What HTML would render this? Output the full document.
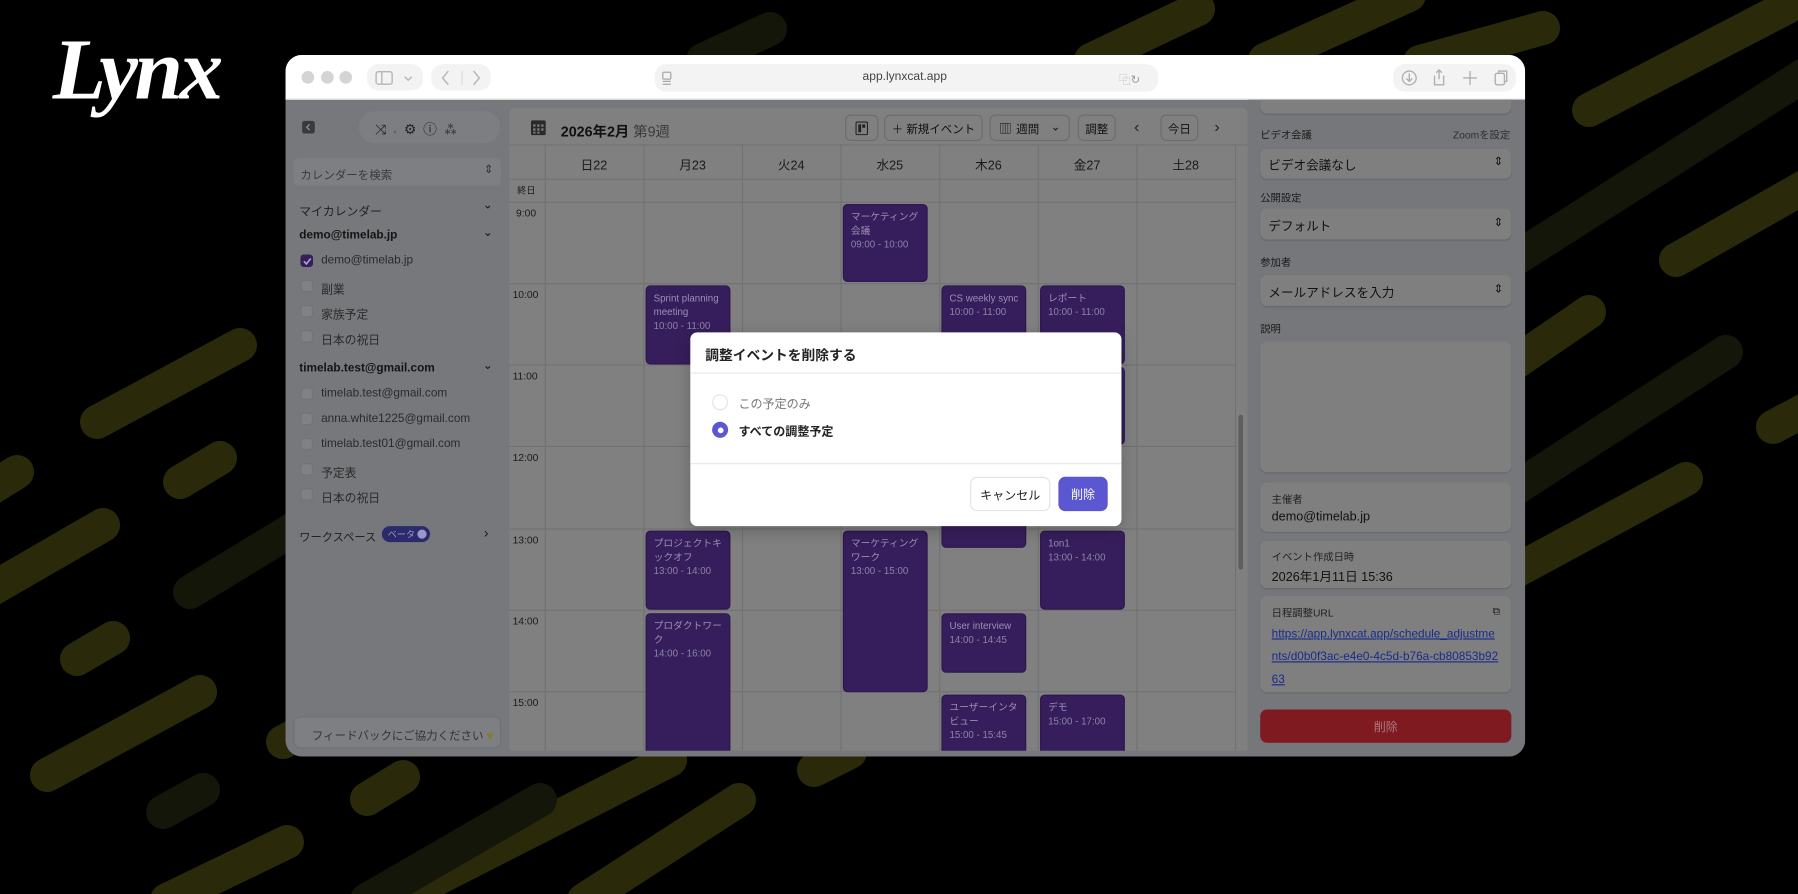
<!DOCTYPE html>
<html><head><meta charset="utf-8">
<style>
*{box-sizing:border-box;margin:0;padding:0}
html,body{width:1798px;height:894px;overflow:hidden;background:#000;font-family:"Liberation Sans","Noto Sans CJK JP",sans-serif}
#bg{position:absolute;left:0;top:0}
#wrap{position:absolute;left:0;top:0;width:1568px;height:780px;transform:scale(1.14668,1.14615);transform-origin:0 0}
.a{position:absolute}
.logo{left:46px;top:18px;color:#fff;font-family:"Liberation Serif",serif;font-style:italic;font-weight:bold;font-size:76px;letter-spacing:-3px}
.win{left:249px;top:48px;width:1081px;height:612px;border-radius:14px;overflow:hidden;background:#77787b}
.tb{left:0;top:0;width:1081px;height:39px;background:#fff;border-bottom:1px solid #e4e4e4}
.dot{width:11px;height:11px;border-radius:50%;background:#d4d4d4;top:14px}
.pill{background:#f3f3f3;border-radius:10px}
.sb{color:#141414;font-size:10.3px}
.cb{width:11px;height:11px;border-radius:3px;background:#808184;border:1px solid #727376}
.main{left:195px;top:46px;width:644px;height:561px;background:#808080;border-radius:6px 6px 0 0;overflow:hidden}
.vl{width:1px;background:#727272}
.hl{height:1px;background:#727272}
.btn{border:1px solid #6c6c6c;border-radius:5px;height:23px;top:6px;font-size:10px;color:#111;display:flex;align-items:center;justify-content:center;gap:4px}
.ev{background:#361e5c;border-radius:4px;color:#9a90b2;font-size:8.5px;padding:4px 6px;line-height:12px;border:1px solid #2d174e}
.ev .t{color:#8c84a3}
.rp{left:839px;top:39px;width:242px;height:573px;background:#76777a;overflow:hidden}
.fld{left:11px;width:219px;background:#7f7f80;border-radius:6px;font-size:11px;color:#111;box-shadow:0 1px 1px rgba(0,0,0,.12)}
.lbl{left:11px;font-size:9px;color:#1a1a1a}
.modal{left:602px;top:290px;width:376px;height:169px;background:#fff;border-radius:6px;box-shadow:0 4px 14px rgba(0,0,0,.2)}
</style></head><body>
<svg id="bg" width="1798" height="894" stroke-linecap="round" stroke-width="34" fill="none">
<g stroke="#2a2a0b">
<line x1="97" y1="422" x2="240" y2="345"/>
<line x1="-20" y1="495" x2="17" y2="472"/>
<line x1="180" y1="482" x2="220" y2="458"/>
<line x1="-20" y1="596" x2="103" y2="525"/>
<line x1="77" y1="659" x2="113" y2="638"/>
<line x1="47" y1="775" x2="200" y2="692"/>
<line x1="167" y1="900" x2="287" y2="842"/>
<line x1="367" y1="799" x2="403" y2="777"/>
<line x1="283" y1="742" x2="300" y2="733"/>
<line x1="395" y1="900" x2="670" y2="760"/>
<line x1="584" y1="900" x2="739" y2="800"/>
<line x1="814" y1="770" x2="850" y2="752"/>
<line x1="1091" y1="60" x2="1198" y2="9"/>
<line x1="1265" y1="60" x2="1409" y2="-5"/>
<line x1="1420" y1="62" x2="1543" y2="28"/>
<line x1="1589" y1="110" x2="1820" y2="-10"/>
<line x1="1676" y1="260" x2="1820" y2="178"/>
<line x1="1490" y1="380" x2="1589" y2="312"/>
<line x1="1773" y1="427" x2="1820" y2="402"/>
<line x1="1490" y1="585" x2="1686" y2="479"/>
</g>
<g stroke="#15160a">
<line x1="190" y1="592" x2="300" y2="525"/>
<line x1="163" y1="812" x2="203" y2="790"/>
<line x1="367" y1="900" x2="540" y2="800"/>
<line x1="703" y1="60" x2="770" y2="29"/>
<line x1="1490" y1="275" x2="1820" y2="65"/>
<line x1="1490" y1="505" x2="1726" y2="352"/>
</g>
</svg>
<div id="wrap">
<div class="a logo">Lynx</div>
<div class="a win">
 <div class="a tb">
  <div class="a dot" style="left:14px"></div><div class="a dot" style="left:31px"></div><div class="a dot" style="left:47px"></div>
  <div class="a pill" style="left:71px;top:8px;width:49px;height:23px"></div>
  <svg class="a" style="left:78px;top:13px" width="40" height="14" fill="none" stroke="#b5b5b5" stroke-width="1.2"><rect x="1" y="1.5" width="14" height="11" rx="2"/><line x1="6" y1="1.5" x2="6" y2="12.5"/><path d="M26 6l3 3 3-3"/></svg>
  <div class="a pill" style="left:127px;top:8px;width:52px;height:23px"></div>
  <svg class="a" style="left:134px;top:12px" width="40" height="16" fill="none" stroke="#b5b5b5" stroke-width="1.3"><path d="M8 2l-5 6 5 6"/><line x1="20" y1="2" x2="20" y2="14" stroke="#e0e0e0"/><path d="M30 2l5 6-5 6"/></svg>
  <div class="a pill" style="left:322px;top:8px;width:439px;height:24px"></div>
  <svg class="a" style="left:328px;top:14px" width="10" height="13" fill="none" stroke="#a8a8a8" stroke-width="1.1"><rect x="1" y="1" width="7" height="6" rx="1"/><line x1="1" y1="9" x2="8" y2="9"/><line x1="1" y1="11.5" x2="8" y2="11.5"/></svg>
  <div class="a" style="left:490px;top:13px;width:100px;text-align:center;font-size:10.5px;color:#444">app.lynxcat.app</div>
  <div class="a" style="left:727px;top:13px;font-size:10px;color:#9a9a9a">⿻↻</div>
  <div class="a pill" style="left:966px;top:8px;width:107px;height:24px"></div>
  <svg class="a" style="left:972px;top:12px" width="100" height="16" fill="none" stroke="#b0b0b0" stroke-width="1.2"><circle cx="8" cy="8" r="6"/><path d="M8 4v7M5.5 8.5L8 11l2.5-2.5"/><path d="M30 6v8h8V6M34 1v8M31.5 3.5L34 1l2.5 2.5"/><path d="M61 2v12M55 8h12"/><rect x="83" y="4" width="8" height="10" rx="1.5"/><path d="M86 4V2h7v9h-2"/></svg>
 </div>
 <!-- sidebar -->
 <svg class="a" style="left:14px;top:57px" width="12" height="12"><rect x="0.5" y="0.5" width="11" height="11" rx="2" fill="#3a3a3c"/><path d="M7 3.5L4.5 6 7 8.5" stroke="#9a9a9a" fill="none"/></svg>
 <div class="a" style="left:64px;top:49px;width:123px;height:28px;border-radius:14px;background:#7d7e81"></div>
 <div class="a" style="left:78px;top:56px;font-size:12px;color:#222;letter-spacing:6px">⤨<span style="font-size:6px;color:#666">●</span>⚙ⓘ<span>⁂</span></div>
 <div class="a" style="left:7px;top:90px;width:181px;height:24px;border-radius:5px;background:#7e7f82"></div>
 <div class="a sb" style="left:13px;top:96px;font-size:10px;color:#3a3a3a">カレンダーを検索</div>
 <div class="a sb" style="left:173px;top:95px;font-size:10px;color:#333">⇕</div>
 <div class="a sb" style="left:12px;top:128px;color:#222">マイカレンダー</div><div class="a sb" style="left:172px;top:125px">⌄</div>
 <div class="a sb" style="left:12px;top:152px;font-weight:bold">demo@timelab.jp</div><div class="a sb" style="left:172px;top:149px">⌄</div>
 <div class="a cb" style="left:13px;top:174px;background:#361e5c;border-color:#361e5c"></div>
 <svg class="a" style="left:14px;top:175px" width="10" height="10"><path d="M2 5l2.2 2.3L8 2.5" stroke="#b0a8c8" stroke-width="1.4" fill="none"/></svg>
 <div class="a sb" style="left:31px;top:174px;color:#2a2a2a">demo@timelab.jp</div>
 <div class="a cb" style="left:13px;top:196px"></div><div class="a sb" style="left:31px;top:196px;color:#2a2a2a">副業</div>
 <div class="a cb" style="left:13px;top:218px"></div><div class="a sb" style="left:31px;top:218px;color:#2a2a2a">家族予定</div>
 <div class="a cb" style="left:13px;top:240px"></div><div class="a sb" style="left:31px;top:240px;color:#2a2a2a">日本の祝日</div>
 <div class="a sb" style="left:12px;top:268px;font-weight:bold">timelab.test@gmail.com</div><div class="a sb" style="left:172px;top:265px">⌄</div>
 <div class="a cb" style="left:13px;top:290px"></div><div class="a sb" style="left:31px;top:290px;color:#2a2a2a">timelab.test@gmail.com</div>
 <div class="a cb" style="left:13px;top:312px"></div><div class="a sb" style="left:31px;top:312px;color:#2a2a2a">anna.white1225@gmail.com</div>
 <div class="a cb" style="left:13px;top:334px"></div><div class="a sb" style="left:31px;top:334px;color:#2a2a2a">timelab.test01@gmail.com</div>
 <div class="a cb" style="left:13px;top:356px"></div><div class="a sb" style="left:31px;top:356px;color:#2a2a2a">予定表</div>
 <div class="a cb" style="left:13px;top:378px"></div><div class="a sb" style="left:31px;top:378px;color:#2a2a2a">日本の祝日</div>
 <div class="a sb" style="left:12px;top:413px;color:#222;font-size:9.8px">ワークスペース</div>
 <div class="a" style="left:84px;top:411px;width:42px;height:14px;border-radius:7px;background:#2b2a6a;color:#9a98c8;font-size:8px;padding:2px 0 0 5px">ベータ <span style="display:inline-block;width:8px;height:8px;border-radius:50%;background:#9a98c8;vertical-align:-1px"></span></div>
 <div class="a sb" style="left:173px;top:410px;font-size:12px">›</div>
 <div class="a" style="left:7px;top:577px;width:181px;height:28px;border-radius:6px;background:#7e7f82;border:1px solid #707174;font-size:10px;color:#333;padding:7px 0 0 15px">フィードバックにご協力ください <span style="color:#8a7a20">♥</span></div>
 <!-- main calendar -->
 <div class="a main">
  <svg class="a" style="left:19px;top:10px" width="13" height="14" fill="#2a2a2a"><rect x="0" y="1" width="13" height="13" rx="1.5"/><g fill="#808080"><rect x="2" y="4.5" width="2" height="2"/><rect x="5.5" y="4.5" width="2" height="2"/><rect x="9" y="4.5" width="2" height="2"/><rect x="2" y="8" width="2" height="2"/><rect x="5.5" y="8" width="2" height="2"/><rect x="9" y="8" width="2" height="2"/><rect x="2" y="11" width="2" height="1.5"/><rect x="5.5" y="11" width="2" height="1.5"/></g></svg>
  <div class="a" style="left:45px;top:10px;font-size:12.5px;font-weight:bold;color:#111">2026年2月 <span style="font-weight:normal;color:#3a3a3a">第9週</span></div>
  <div class="a btn" style="left:293px;width:29px"><svg width="11" height="12"><rect x="0.5" y="0.5" width="10" height="11" rx="1" fill="none" stroke="#222"/><rect x="2.5" y="2.5" width="2.5" height="7" fill="#222"/><rect x="6" y="2.5" width="2.5" height="3" fill="#222"/></svg></div>
  <div class="a btn" style="left:327px;width:86px">＋ 新規イベント</div>
  <div class="a btn" style="left:419px;width:70px"><span style="font-size:11px">▥</span> 週間 <span style="margin-left:6px">⌄</span></div>
  <div class="a btn" style="left:496px;width:33px">調整</div>
  <div class="a" style="left:545px;top:8px;font-size:14px;color:#222">‹</div>
  <div class="a btn" style="left:568px;width:33px">今日</div>
  <div class="a" style="left:615px;top:8px;font-size:14px;color:#222">›</div>
  <div class="a hl" style="left:0;top:32px;width:644px"></div>
  <div class="a hl" style="left:0;top:62px;width:633px"></div>
  <div class="a hl" style="left:0;top:82px;width:633px"></div>
  <div class="a hl" style="left:0;top:153px;width:633px"></div>
  <div class="a hl" style="left:0;top:224px;width:633px"></div>
  <div class="a hl" style="left:0;top:295px;width:633px"></div>
  <div class="a hl" style="left:0;top:367px;width:633px"></div>
  <div class="a hl" style="left:0;top:438px;width:633px"></div>
  <div class="a hl" style="left:0;top:509px;width:633px"></div>
  <div class="a vl" style="left:31px;top:32px;height:530px"></div>
  <div class="a vl" style="left:117px;top:32px;height:530px"></div>
  <div class="a vl" style="left:203px;top:32px;height:530px"></div>
  <div class="a vl" style="left:289px;top:32px;height:530px"></div>
  <div class="a vl" style="left:375px;top:32px;height:530px"></div>
  <div class="a vl" style="left:461px;top:32px;height:530px"></div>
  <div class="a vl" style="left:547px;top:32px;height:530px"></div>
  <div class="a vl" style="left:633px;top:32px;height:530px"></div>
  <div class="a" style="left:636px;top:268px;width:4px;height:135px;border-radius:2px;background:#5e5e5e"></div>
  <div class="a" style="left:31px;top:42px;width:86px;text-align:center;font-size:11px;color:#1a1a1a">日22</div>
  <div class="a" style="left:117px;top:42px;width:86px;text-align:center;font-size:11px;color:#1a1a1a">月23</div>
  <div class="a" style="left:203px;top:42px;width:86px;text-align:center;font-size:11px;color:#1a1a1a">火24</div>
  <div class="a" style="left:289px;top:42px;width:86px;text-align:center;font-size:11px;color:#1a1a1a">水25</div>
  <div class="a" style="left:375px;top:42px;width:86px;text-align:center;font-size:11px;color:#1a1a1a">木26</div>
  <div class="a" style="left:461px;top:42px;width:86px;text-align:center;font-size:11px;color:#1a1a1a">金27</div>
  <div class="a" style="left:547px;top:42px;width:86px;text-align:center;font-size:11px;color:#1a1a1a">土28</div>
  <div class="a" style="left:7px;top:67px;font-size:8px;color:#1a1a1a">終日</div>
  <div class="a" style="left:6px;top:87px;font-size:9px;color:#1a1a1a">9:00</div>
  <div class="a" style="left:3px;top:158px;font-size:9px;color:#1a1a1a">10:00</div>
  <div class="a" style="left:3px;top:229px;font-size:9px;color:#1a1a1a">11:00</div>
  <div class="a" style="left:3px;top:300px;font-size:9px;color:#1a1a1a">12:00</div>
  <div class="a" style="left:3px;top:372px;font-size:9px;color:#1a1a1a">13:00</div>
  <div class="a" style="left:3px;top:443px;font-size:9px;color:#1a1a1a">14:00</div>
  <div class="a" style="left:3px;top:514px;font-size:9px;color:#1a1a1a">15:00</div>
  <div class="a ev" style="left:291px;top:84px;width:74px;height:68px">マーケティング会議<br><span class="t">09:00 - 10:00</span></div>
  <div class="a ev" style="left:119px;top:155px;width:74px;height:69px">Sprint planning meeting<br><span class="t">10:00 - 11:00</span></div>
  <div class="a ev" style="left:377px;top:155px;width:74px;height:69px">CS weekly sync<br><span class="t">10:00 - 11:00</span></div>
  <div class="a ev" style="left:463px;top:155px;width:74px;height:69px">レポート<br><span class="t">10:00 - 11:00</span></div>
  <div class="a ev" style="left:463px;top:226px;width:74px;height:68px"></div>
  <div class="a ev" style="left:377px;top:226px;width:74px;height:158px"></div>
  <div class="a ev" style="left:119px;top:369px;width:74px;height:69px">プロジェクトキックオフ<br><span class="t">13:00 - 14:00</span></div>
  <div class="a ev" style="left:291px;top:369px;width:74px;height:141px">マーケティングワーク<br><span class="t">13:00 - 15:00</span></div>
  <div class="a ev" style="left:463px;top:369px;width:74px;height:69px">1on1<br><span class="t">13:00 - 14:00</span></div>
  <div class="a ev" style="left:119px;top:441px;width:74px;height:130px">プロダクトワーク<br><span class="t">14:00 - 16:00</span></div>
  <div class="a ev" style="left:377px;top:441px;width:74px;height:52px">User interview<br><span class="t">14:00 - 14:45</span></div>
  <div class="a ev" style="left:377px;top:512px;width:74px;height:60px">ユーザーインタビュー<br><span class="t">15:00 - 15:45</span></div>
  <div class="a ev" style="left:463px;top:512px;width:74px;height:60px">デモ<br><span class="t">15:00 - 17:00</span></div>
 </div>
 <!-- right panel -->
 <div class="a rp">
  <div class="a fld" style="top:-6px;height:18px"></div>
  <div class="a lbl" style="top:24px">ビデオ会議</div>
  <div class="a lbl" style="left:179px;top:24px;color:#2e2e2e">Zoomを設定</div>
  <div class="a fld" style="top:43px;height:26px;padding:6px 7px">ビデオ会議なし<span style="float:right;font-size:10px">⇕</span></div>
  <div class="a lbl" style="top:79px">公開設定</div>
  <div class="a fld" style="top:95px;height:27px;padding:7px 7px">デフォルト<span style="float:right;font-size:10px">⇕</span></div>
  <div class="a lbl" style="top:135px">参加者</div>
  <div class="a fld" style="top:153px;height:27px;padding:7px 7px">メールアドレスを入力<span style="float:right;font-size:10px">⇕</span></div>
  <div class="a lbl" style="top:193px">説明</div>
  <div class="a fld" style="top:211px;height:114px"></div>
  <div class="a fld" style="top:334px;height:43px;padding:8px 10px"><div style="font-size:9px;color:#222">主催者</div><div style="margin-top:3px">demo@timelab.jp</div></div>
  <div class="a fld" style="top:385px;height:41px;padding:7px 10px"><div style="font-size:9px;color:#222">イベント作成日時</div><div style="margin-top:3px">2026年1月11日 15:36</div></div>
  <div class="a fld" style="top:433px;height:84px;padding:8px 10px"><div style="font-size:9px;color:#222">日程調整URL<span style="float:right">⧉</span></div><div style="margin-top:3px;color:#1a2b8a;text-decoration:underline;font-size:10.3px;line-height:20px;word-break:break-all">https://app.lynxcat.app/schedule_adjustments/d0b0f3ac-e4e0-4c5d-b76a-cb80853b9263</div></div>
  <div class="a" style="left:11px;top:532px;width:219px;height:29px;border-radius:6px;background:#7e1a20;color:#b07a7d;font-size:10.5px;text-align:center;padding-top:8px">削除</div>
 </div>
</div>
<!-- modal -->
<div class="a modal">
 <div class="a" style="left:13px;top:11px;font-size:12px;font-weight:bold;color:#222">調整イベントを削除する</div>
 <div class="a" style="left:0;top:35px;width:376px;height:1px;background:#e8e8e8"></div>
 <div class="a" style="left:19px;top:54px;width:14px;height:14px;border-radius:50%;border:1px solid #e3e3e3"></div>
 <div class="a" style="left:42px;top:55px;font-size:10.5px;color:#777">この予定のみ</div>
 <div class="a" style="left:19px;top:78px;width:14px;height:14px;border-radius:50%;background:#5b57d1"></div>
 <div class="a" style="left:24px;top:83px;width:5px;height:5px;border-radius:50%;background:#fff"></div>
 <div class="a" style="left:42px;top:79px;font-size:10.5px;font-weight:bold;color:#222">すべての調整予定</div>
 <div class="a" style="left:0;top:114px;width:376px;height:1px;background:#e8e8e8"></div>
 <div class="a" style="left:244px;top:126px;width:70px;height:30px;border-radius:6px;border:1px solid #e3e3e3;font-size:10.5px;color:#222;text-align:center;padding-top:8px">キャンセル</div>
 <div class="a" style="left:321px;top:126px;width:43px;height:30px;border-radius:6px;background:#5b57d1;font-size:10.5px;color:#fff;text-align:center;padding-top:8px">削除</div>
</div>
</div>
</body></html>
